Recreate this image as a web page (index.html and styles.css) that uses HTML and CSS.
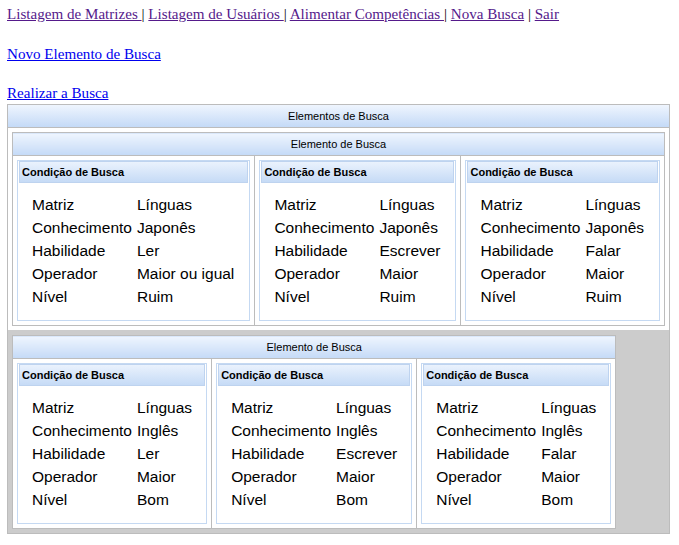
FILE: index.html
```html
<!DOCTYPE html>
<html lang="pt-BR">
<head>
<meta charset="utf-8">
<title>Busca</title>
<link rel="stylesheet" href="styles.css">
</head>
<body>
<div class="nav"><a class="lnk-v" href="#">Listagem de Matrizes </a>| <a class="lnk-v" href="#">Listagem de Usuários </a>| <a class="lnk-v" href="#">Alimentar Competências </a>| <a class="lnk-v" href="#">Nova Busca</a> | <a class="lnk-v" href="#">Sair</a></div>
<div class="line line-new"><a class="lnk" href="#">Novo Elemento de Busca</a></div>
<div class="line line-search"><a class="lnk" href="#">Realizar a Busca</a></div>

<div class="panel">
  <div class="panel-h">Elementos de Busca</div>
  <div class="row row-1">
    <table class="el el-full">
      <tr><th class="el-h" colspan="3">Elemento de Busca</th></tr>
      <tr>
        <td class="el-c">
          <div class="cond">
            <div class="cond-h">Condição de Busca</div>
            <table class="kv">
              <tr><td class="k">Matriz</td><td>Línguas</td></tr>
              <tr><td class="k">Conhecimento</td><td>Japonês</td></tr>
              <tr><td class="k">Habilidade</td><td>Ler</td></tr>
              <tr><td class="k">Operador</td><td>Maior ou igual</td></tr>
              <tr><td class="k">Nível</td><td>Ruim</td></tr>
            </table>
          </div>
        </td>
        <td class="el-c">
          <div class="cond">
            <div class="cond-h">Condição de Busca</div>
            <table class="kv">
              <tr><td class="k">Matriz</td><td>Línguas</td></tr>
              <tr><td class="k">Conhecimento</td><td>Japonês</td></tr>
              <tr><td class="k">Habilidade</td><td>Escrever</td></tr>
              <tr><td class="k">Operador</td><td>Maior</td></tr>
              <tr><td class="k">Nível</td><td>Ruim</td></tr>
            </table>
          </div>
        </td>
        <td class="el-c">
          <div class="cond">
            <div class="cond-h">Condição de Busca</div>
            <table class="kv">
              <tr><td class="k">Matriz</td><td>Línguas</td></tr>
              <tr><td class="k">Conhecimento</td><td>Japonês</td></tr>
              <tr><td class="k">Habilidade</td><td>Falar</td></tr>
              <tr><td class="k">Operador</td><td>Maior</td></tr>
              <tr><td class="k">Nível</td><td>Ruim</td></tr>
            </table>
          </div>
        </td>
      </tr>
    </table>
  </div>
  <div class="row row-2">
    <table class="el">
      <tr><th class="el-h" colspan="3">Elemento de Busca</th></tr>
      <tr>
        <td class="el-c">
          <div class="cond">
            <div class="cond-h">Condição de Busca</div>
            <table class="kv">
              <tr><td class="k">Matriz</td><td>Línguas</td></tr>
              <tr><td class="k">Conhecimento</td><td>Inglês</td></tr>
              <tr><td class="k">Habilidade</td><td>Ler</td></tr>
              <tr><td class="k">Operador</td><td>Maior</td></tr>
              <tr><td class="k">Nível</td><td>Bom</td></tr>
            </table>
          </div>
        </td>
        <td class="el-c">
          <div class="cond">
            <div class="cond-h">Condição de Busca</div>
            <table class="kv">
              <tr><td class="k">Matriz</td><td>Línguas</td></tr>
              <tr><td class="k">Conhecimento</td><td>Inglês</td></tr>
              <tr><td class="k">Habilidade</td><td>Escrever</td></tr>
              <tr><td class="k">Operador</td><td>Maior</td></tr>
              <tr><td class="k">Nível</td><td>Bom</td></tr>
            </table>
          </div>
        </td>
        <td class="el-c">
          <div class="cond">
            <div class="cond-h">Condição de Busca</div>
            <table class="kv">
              <tr><td class="k">Matriz</td><td>Línguas</td></tr>
              <tr><td class="k">Conhecimento</td><td>Inglês</td></tr>
              <tr><td class="k">Habilidade</td><td>Falar</td></tr>
              <tr><td class="k">Operador</td><td>Maior</td></tr>
              <tr><td class="k">Nível</td><td>Bom</td></tr>
            </table>
          </div>
        </td>
      </tr>
    </table>
  </div>
</div>
</body>
</html>
```

FILE: styles.css
```css
html, body {
  background: #ffffff;
}
body {
  margin: 0;
  padding: 5px 9px 0 7px;
  font-family: "Liberation Serif", "Times New Roman", serif;
  font-size: 15.1px;
  color: #000000;
}
.nav,
.line {
  line-height: 18px;
  height: 18px;
  white-space: nowrap;
}
.line-new {
  margin-top: 22px;
}
.line-search {
  margin-top: 21px;
}
.lnk-v {
  color: #551a8b;
  text-decoration: underline;
}
.lnk {
  color: #0000ee;
  text-decoration: underline;
}

.panel {
  margin-top: 2px;
  border: 1px solid #bcbcbc;
  font-family: "Liberation Sans", Arial, sans-serif;
}
.panel-h {
  height: 22px;
  line-height: 22px;
  text-align: center;
  font-size: 11px;
  color: #000000;
  border-bottom: 1px solid #bcbcbc;
  background: linear-gradient(#eff5fe, #c4daf7);
}
.row {
  padding: 4px;
}
.row-1 {
  background: #ffffff;
}
.row-2 {
  background: #cccccc;
  padding: 5px 4px 4px;
}

table.el {
  border-collapse: collapse;
  border: 1px solid #bcbcbc;
  background: #ffffff;
}
table.el-full {
  width: 100%;
}
.el-h {
  height: 22px;
  line-height: 22px;
  padding: 0;
  border: 1px solid #bcbcbc;
  font-size: 11px;
  font-weight: normal;
  text-align: center;
  color: #000000;
  background: linear-gradient(#eff5fe, #c4daf7);
}
.el-c {
  border: 1px solid #bcbcbc;
  padding: 4px;
  vertical-align: top;
}

.cond {
  border: 1px solid #c5d9f2;
  background: #ffffff;
}
.cond-h {
  margin: 0 1px;
  height: 20px;
  line-height: 20px;
  padding-left: 2px;
  border: 1px solid #bed3ef;
  font-size: 11px;
  font-weight: bold;
  color: #000000;
  background: linear-gradient(#eaf2fd, #c6dbf6);
}
table.kv {
  margin: 10px 14px 12px;
  border-spacing: 0;
  font-size: 15.5px;
  line-height: 23px;
  color: #000000;
  white-space: nowrap;
}
table.kv td {
  padding: 0;
}
table.kv td.k {
  padding-right: 5px;
}
```
